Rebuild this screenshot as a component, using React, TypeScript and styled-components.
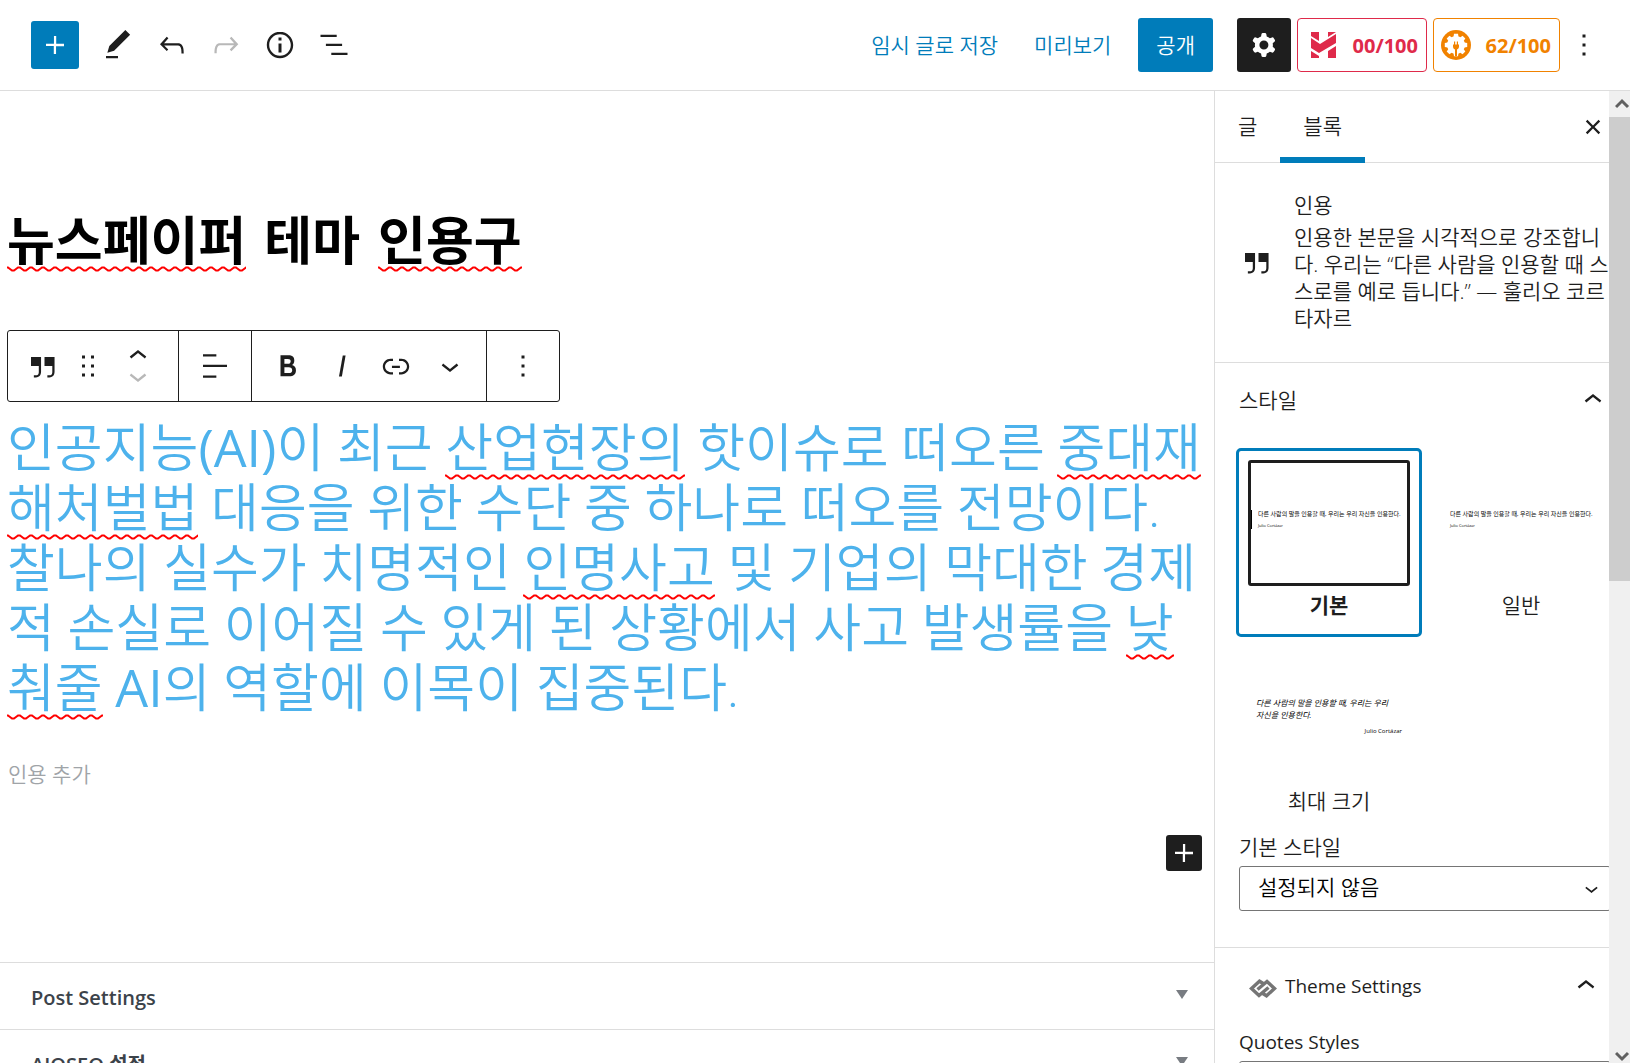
import React from "react";
import styled, { createGlobalStyle, css } from "styled-components";

const BLUE = "#007cba";
const INK = "#1e1e1e";
const LINE = "#dddddd";

const wave =
  "url(\"data:image/svg+xml,%3Csvg xmlns='http://www.w3.org/2000/svg' width='12' height='6'%3E%3Cpath d='M-1 1.5 L1 1.5 L5 4.5 L7 4.5 L11 1.5 L13 1.5' fill='none' stroke='%23ff0000' stroke-width='2'/%3E%3C/svg%3E\")";

const GlobalStyle = createGlobalStyle`
  * { box-sizing: border-box; }
  html, body, #root { height: 100%; }
  body {
    margin: 0;
    overflow: hidden;
    background: #fff;
    color: ${INK};
    font-family: "Open Sans", "Noto Sans CJK KR", sans-serif;
    font-size: 21px;
    line-height: 27px;
  }
  button, select, input, textarea { font: inherit; color: inherit; }
  h1, h2, h3, p { margin: 0; }
`;

const Page = styled.div`
  display: flex;
  flex-direction: column;
  height: 100vh;
`;

const Header = styled.header`
  flex: none;
  display: flex;
  align-items: center;
  justify-content: space-between;
  height: 91px;
  padding: 0 28px 0 31px;
  border-bottom: 1px solid ${LINE};
`;

const HeaderTools = styled.div`
  display: flex;
  align-items: center;
`;

const HeaderActions = styled.div`
  display: flex;
  align-items: center;
  gap: 6px;
`;

const IconButton = styled.button<{ $w?: number; $h?: number; $faint?: boolean }>`
  display: flex;
  align-items: center;
  justify-content: center;
  flex: none;
  width: ${(p) => p.$w ?? 54}px;
  height: ${(p) => p.$h ?? 54}px;
  padding: 0;
  border: 0;
  background: none;
  color: ${(p) => (p.$faint ? "#b8b8b8" : INK)};
`;

const InserterButton = styled(IconButton)`
  margin-right: 12px;
  border-radius: 3px;
  background: ${BLUE};
  color: #fff;
`;

const TextButton = styled.button`
  padding: 0;
  margin-right: 30px;
  border: 0;
  background: none;
  color: ${BLUE};
  font-weight: 350;
  white-space: nowrap;
`;

const PublishButton = styled.button`
  height: 54px;
  padding: 0 18px;
  margin: 0 18px 0 -9px;
  border: 0;
  border-radius: 3px;
  background: ${BLUE};
  color: #fff;
  font-weight: 350;
`;

const SettingsButton = styled(IconButton)`
  border-radius: 3px;
  background: ${INK};
  color: #fff;
`;

const ScoreButton = styled.button<{ $tone: string; $w: number }>`
  display: flex;
  align-items: center;
  justify-content: space-between;
  width: ${(p) => p.$w}px;
  height: 54px;
  padding: 0 8px 0 7px;
  border: 1px solid ${(p) => p.$tone};
  border-radius: 4px;
  background: #fff;
  color: ${(p) => p.$tone};
  font-size: 20px;
  font-weight: 700;
`;

const Body = styled.div`
  flex: 1;
  min-height: 0;
  display: grid;
  grid-template-columns: minmax(0, 1fr) 416px;
`;

const Editor = styled.main`
  min-width: 0;
  overflow: hidden;
`;

const Canvas = styled.section`
  display: flex;
  flex-direction: column;
  align-items: flex-start;
  height: 871px;
  padding: 118px 7px 0;
`;

const PostTitle = styled.h1`
  font-family: "DejaVu Sans", "Noto Sans CJK KR", sans-serif;
  font-size: 52px;
  line-height: 66px;
  font-weight: 700;
  color: #000;
`;

const Typo = styled.span`
  background: ${wave} repeat-x left bottom;
  -webkit-box-decoration-break: clone;
  box-decoration-break: clone;
`;

const BlockToolbar = styled.div`
  display: flex;
  height: 72px;
  margin-top: 55px;
  border: 1px solid ${INK};
  border-radius: 3px;
`;

const ToolGroup = styled.div`
  display: flex;
  align-items: center;
  padding: 0 9px;
  & + & { border-left: 1px solid ${INK}; }
`;

const Movers = styled.div`
  display: flex;
  flex-direction: column;
`;

const QuoteBlock = styled.blockquote`
  margin: 18px 0 0;
  color: #4db2ec;
  font-family: Roboto, "Noto Sans CJK KR", sans-serif;
  font-size: 52px;
  line-height: 60px;
  font-weight: 350;
`;

const Latin = styled.span`
  font-family: "Open Sans", sans-serif;
  font-weight: 400;
  line-height: 1;
`;

const CitationInput = styled.input`
  width: 400px;
  height: 36px;
  margin-top: 36px;
  padding: 0 1px;
  border: 0;
  outline: 0;
  font-weight: 350;
  &::placeholder { color: #a0a4a8; opacity: 1; }
`;

const AppenderRow = styled.div`
  display: flex;
  justify-content: flex-end;
  align-self: stretch;
  margin-top: 43px;
  padding-right: 5px;
`;

const AppendButton = styled(IconButton)`
  border-radius: 3px;
  background: ${INK};
  color: #fff;
`;

const MetaBox = styled.button`
  display: flex;
  align-items: center;
  justify-content: space-between;
  width: 100%;
  height: 67px;
  padding: 2px 26px 0 31px;
  border: 0;
  border-top: 1px solid ${LINE};
  background: #fff;
  color: #3c434a;
  font-size: 20px;
  font-weight: 600;
  text-align: left;
`;

const Triangle = styled.span`
  margin-bottom: 6px;
  border: 6px solid transparent;
  border-top: 9px solid #787c82;
  border-bottom: 0;
`;

const Sidebar = styled.aside`
  display: grid;
  grid-template-columns: minmax(0, 1fr) 21px;
  min-height: 0;
  border-left: 1px solid ${LINE};
  overflow: hidden;
  font-weight: 350;
`;

const SidebarClip = styled.div`
  min-width: 0;
  overflow: hidden;
`;

const SidebarContent = styled.div`
  width: 420px;
`;

const Tabs = styled.div`
  display: flex;
  align-items: stretch;
  height: 72px;
  border-bottom: 1px solid ${LINE};
`;

const Tab = styled.button<{ $active?: boolean }>`
  padding: 0 23px 2px;
  margin-bottom: -1px;
  border: 0;
  background: none;
  box-shadow: ${(p) => (p.$active ? `inset 0 -6px 0 ${BLUE}` : "none")};
`;

const CloseButton = styled(IconButton)`
  margin: 9px 15px 0 auto;
`;

const BlockCard = styled.section`
  display: grid;
  grid-template-columns: 55px minmax(0, 1fr);
  align-items: center;
  height: 200px;
  padding: 0 24px 2px;
  border-bottom: 1px solid ${LINE};
`;

const BlockIcon = styled.div`
  display: flex;
`;

const CardTitle = styled.h2`
  margin-bottom: 5px;
  font-size: 21px;
  font-weight: 350;
`;

const Panel = styled.section`
  padding: 0 24px 36px;
  border-bottom: 1px solid ${LINE};
`;

const PanelToggle = styled.button<{ $theme?: boolean }>`
  display: flex;
  align-items: center;
  width: 100%;
  height: 74px;
  padding: 0;
  border: 0;
  background: none;
  text-align: left;
  & > svg:last-child { margin-left: auto; }
  ${(p) =>
    p.$theme &&
    css`
      height: 76px;
      margin-bottom: 5px;
      padding: 0 7px 0 10px;
      font-weight: 400;
    `}
`;

const StyleGrid = styled.div`
  display: grid;
  grid-template-columns: 186px 186px;
  gap: 7px 6px;
  margin: 11px -6px 1px -3px;
`;

const StyleCard = styled.button<{ $selected?: boolean }>`
  display: flex;
  flex-direction: column;
  height: 189px;
  padding: 9px;
  border: 3px solid ${(p) => (p.$selected ? BLUE : "transparent")};
  border-radius: 5px;
  background: #fff;
  font-weight: ${(p) => (p.$selected ? 700 : 350)};
  text-align: center;
`;

const Preview = styled.span<{ $selected?: boolean }>`
  display: flex;
  flex-direction: column;
  justify-content: center;
  height: 126px;
  width: 100%;
  padding-bottom: 8px;
  border: 3px solid ${(p) => (p.$selected ? INK : "transparent")};
  border-radius: 3px;
  font-weight: 400;
`;

const PreviewQuote = styled.span<{ $bar?: boolean; $large?: boolean }>`
  display: flex;
  flex-direction: column;
  gap: 5px;
  padding-left: 6px;
  border-left: 1px solid ${(p) => (p.$bar ? "#000" : "transparent")};
  color: #000;
  font-size: 6px;
  line-height: 8px;
  text-align: left;
  white-space: nowrap;
  ${(p) =>
    p.$large &&
    css`
      gap: 7px;
      padding: 0 5px 0 4px;
      font-size: 8px;
      line-height: 12px;
      font-style: italic;
      white-space: normal;
      word-break: keep-all;
    `}
`;

const PreviewCite = styled.span<{ $large?: boolean }>`
  font-size: ${(p) => (p.$large ? 6 : 4)}px;
  line-height: 6px;
  font-style: normal;
  text-align: ${(p) => (p.$large ? "right" : "left")};
`;

const StyleLabel = styled.span`
  margin-top: 6px;
  width: 100%;
`;

const FieldLabel = styled.label<{ $latin?: boolean }>`
  display: block;
  margin-bottom: 5px;
  font-size: ${(p) => (p.$latin ? 19 : 21)}px;
  font-weight: ${(p) => (p.$latin ? 400 : 350)};
`;

const SelectWrap = styled.div`
  display: grid;
  align-items: center;
  & > * { grid-area: 1 / 1; }
  & > svg { justify-self: end; margin-right: 6px; pointer-events: none; }
`;

const Select = styled.select`
  appearance: none;
  width: 100%;
  height: 45px;
  padding: 0 40px 2px 18px;
  border: 1px solid #757575;
  border-radius: 3px;
  background: #fff;
  color: #000;
`;

const ThemeName = styled.span`
  margin-left: 8px;
  font-size: 19px;
`;

const Scrollbar = styled.div`
  display: flex;
  flex-direction: column;
  justify-content: space-between;
  min-height: 0;
  overflow: hidden;
  background: #f0f0f0;
`;

const ScrollArrow = styled.span<{ $h: number }>`
  display: flex;
  align-items: center;
  justify-content: flex-end;
  height: ${(p) => p.$h}px;
  flex: none;
`;

const ScrollThumb = styled.span`
  height: 464px;
  margin-bottom: auto;
  background: #cdcdcd;
`;

const ICONS = {
  plus: "M18 11.2h-5.2V6h-1.5v5.2H6v1.5h5.2V18h1.5v-5.2H18z",
  pencil: "M20.1 5.1L16.9 2 6.2 12.7l-1.3 4.4 4.5-1.3L20.1 5.1zM4 20.8h8v-1.5H4v1.5z",
  undo: "M18.3 11.7c-.6-.6-1.4-.9-2.3-.9H6.7l2.9-3.3-1.1-1-4.5 5L8.5 16l1-1-2.7-2.7H16c.5 0 .9.2 1.3.5 1 1 1 3.4 1 4.5v.3h1.5v-.2c0-1.5 0-4.3-1.5-5.7z",
  redo: "M15.6 6.5l-1.1 1 2.9 3.3H8c-.9 0-1.7.3-2.3.9-1.4 1.5-1.4 4.2-1.4 5.6v.2h1.5v-.3c0-1.1 0-3.5 1-4.5.3-.3.7-.5 1.3-.5h9.2L14.5 15l1.1 1.1 4.6-4.6-4.6-5z",
  info: "M12 3.2c-4.8 0-8.8 3.9-8.8 8.8 0 4.8 3.9 8.8 8.8 8.8 4.8 0 8.8-3.9 8.8-8.8 0-4.8-4-8.8-8.8-8.8zm0 16c-4 0-7.2-3.3-7.2-7.2C4.8 8 8 4.8 12 4.8s7.2 3.3 7.2 7.2c0 4-3.2 7.2-7.2 7.2zM11 17h2v-6h-2v6zm0-8h2V7h-2v2z",
  list: "M13.8 5.2H3v1.5h10.8V5.2zm-3.6 12v1.5H21v-1.5H10.2zm7.2-6H6.6v1.5h10.8v-1.5z",
  quote: "M13 6v6h5.2v4c0 .8-.2 1.4-.5 1.7-.6.6-1.6.6-2.5.5h-.3v1.5h.5c1 0 2.3-.1 3.3-1 .6-.6 1-1.6 1-2.8V6H13zm-9 6h5.2v4c0 .8-.2 1.4-.5 1.7-.6.6-1.6.6-2.5.5h-.3v1.5h.5c1 0 2.3-.1 3.3-1 .6-.6 1-1.6 1-2.8V6H4v6z",
  drag: "M8 7h2V5H8v2zm6-2v2h2V5h-2zm-6 8h2v-2H8v2zm6 0h2v-2h-2v2zm-6 6h2v-2H8v2zm6 0h2v-2h-2v2z",
  up: "M6.5 12.4L12 8l5.5 4.4-.9 1.2L12 10l-4.5 3.6-1-1.2z",
  down: "M17.5 11.6L12 16l-5.5-4.4.9-1.2L12 14l4.5-3.6 1 1.2z",
  align: "M4 19.8h8.9v-1.5H4v1.5zm8.9-15.6H4v1.5h8.9V4.2zm-8.9 7v1.5h16v-1.5H4z",
  bold: "M14.7 11.3c1-.6 1.5-1.6 1.5-3 0-2.3-1.3-3.4-4-3.4H7v14h5.8c1.4 0 2.5-.3 3.3-1 .8-.7 1.2-1.7 1.2-2.9.1-1.9-.8-3.1-2.6-3.7zm-5.1-4h2.3c.6 0 1.1.1 1.4.4.3.3.5.7.5 1.2s-.2 1-.5 1.2c-.3.3-.8.4-1.4.4H9.6V7.3zm4.6 9c-.4.3-1 .4-1.7.4H9.6v-3.9h2.9c.7 0 1.3.2 1.7.5.4.3.6.8.6 1.5s-.2 1.2-.6 1.5z",
  italic: "M12.5 5L10 19h1.9l2.5-14z",
  link: "M15.6 7.2H14v1.5h1.6c2 0 3.7 1.7 3.7 3.7s-1.7 3.7-3.7 3.7H14v1.5h1.6c2.8 0 5.2-2.3 5.2-5.2 0-2.9-2.3-5.2-5.2-5.2zM4.7 12.4c0-2 1.7-3.7 3.7-3.7H10V7.2H8.4c-2.9 0-5.2 2.3-5.2 5.2 0 2.9 2.3 5.2 5.2 5.2H10v-1.5H8.4c-2 0-3.7-1.7-3.7-3.7zm4.6.9h5.3v-1.5H9.3v1.5z",
  more: "M13 19h-2v-2h2v2zm0-6h-2v-2h2v2zm0-6h-2V5h2v2z",
  close: "M12 13.06l3.712 3.713 1.061-1.06L13.061 12l3.712-3.712-1.06-1.06L12 10.938 8.288 7.227l-1.061 1.06L10.939 12l-3.712 3.712 1.06 1.061L12 13.061z",
  cog: "M10.289 4.836A1 1 0 0111.275 4h1.306a1 1 0 01.987.836l.244 1.466c.787.26 1.503.679 2.108 1.218l1.393-.522a1 1 0 011.216.437l.653 1.13a1 1 0 01-.23 1.273l-1.148.944a6.025 6.025 0 010 2.435l1.149.946a1 1 0 01.23 1.272l-.653 1.13a1 1 0 01-1.216.437l-1.394-.522c-.605.54-1.32.958-2.108 1.218l-.244 1.466a1 1 0 01-.987.836h-1.306a1 1 0 01-.986-.836l-.244-1.466a5.995 5.995 0 01-2.108-1.218l-1.394.522a1 1 0 01-1.217-.436l-.653-1.131a1 1 0 01.23-1.272l1.149-.946a6.026 6.026 0 010-2.435l-1.148-.944a1 1 0 01-.23-1.272l.653-1.131a1 1 0 011.217-.437l1.393.522a5.994 5.994 0 012.108-1.218l.244-1.466zM14.929 12a3 3 0 11-6 0 3 3 0 016 0z",
};

function Icon({ name, size = 36 }: { name: keyof typeof ICONS; size?: number }) {
  return (
    <svg width={size} height={size} viewBox="0 0 24 24" fill="currentColor" fillRule="evenodd" aria-hidden="true">
      <path d={ICONS[name]} />
    </svg>
  );
}

const HeadlineLogo = () => (
  <svg width="37" height="26" viewBox="-6 0 37 26" fill="currentColor" aria-hidden="true">
    <path d="M0 0h8v9L0 4zM17 0h8l-8 5zM0 6l9 6 16-10v9L8 21 0 16zM0 19l8 5v2H0zM25 14v12h-8v-7z" />
  </svg>
);

const SeoLogo = () => (
  <svg width="30" height="30" viewBox="0 0 30 30" aria-hidden="true">
    <circle cx="15" cy="15" r="15" fill="currentColor" />
    <circle cx="15" cy="15" r="9" fill="#fff" />
    <g fill="#fff">
      {[0, 45, 90, 135, 180, 225, 270, 315].map((angle) => (
        <path key={angle} d="M12.300 8L13 3.800h4L17.700 8z" transform={`rotate(${angle} 15 15)`} />
      ))}
    </g>
    <path d="M12 14.500h6v2c0 1.500-.8 2.500-2 3V26h-2v-6.500c-1.200-.5-2-1.500-2-3zM13 11.500h1.200v3H13zM15.800 11.500H17v3h-1.200z" fill="currentColor" />
  </svg>
);

const ThemeLogo = () => (
  <svg width="28" height="23" viewBox="0 -4 28 23" fill="none" stroke="#757575" strokeWidth="3.400" aria-hidden="true">
    <path d="M15 5L10.500 2.200 2.500 9.500l7.500 7 9.500-8M13 14l4.500 2.800 8-7.300-7.500-7-9.500 8" />
  </svg>
);

const QUOTE = "다른 사람의 말을 인용할 때, 우리는 우리 자신을 인용한다.";

export default function App() {
  return (
    <>
      <GlobalStyle />
      <Page>
        <Header>
          <HeaderTools>
            <InserterButton $w={48} $h={48} aria-label="블록 삽입"><Icon name="plus" /></InserterButton>
            <IconButton aria-label="도구"><Icon name="pencil" /></IconButton>
            <IconButton aria-label="되돌리기"><Icon name="undo" /></IconButton>
            <IconButton $faint aria-label="다시 실행"><Icon name="redo" /></IconButton>
            <IconButton aria-label="세부사항"><Icon name="info" /></IconButton>
            <IconButton aria-label="목록 보기"><Icon name="list" /></IconButton>
          </HeaderTools>
          <HeaderActions>
            <TextButton>임시 글로 저장</TextButton>
            <TextButton>미리보기</TextButton>
            <PublishButton>공개</PublishButton>
            <SettingsButton aria-label="설정"><Icon name="cog" /></SettingsButton>
            <ScoreButton $w={130} $tone="#df2a4a"><HeadlineLogo />00/100</ScoreButton>
            <ScoreButton $w={127} $tone="#f18200"><SeoLogo />62/100</ScoreButton>
            <IconButton $w={36} aria-label="옵션"><Icon name="more" /></IconButton>
          </HeaderActions>
        </Header>

        <Body>
          <Editor>
            <Canvas>
              <PostTitle><Typo>뉴스페이퍼</Typo> 테마 <Typo>인용구</Typo></PostTitle>
              <BlockToolbar role="toolbar" aria-label="블록 도구">
                <ToolGroup>
                  <IconButton $w={52} aria-label="인용"><Icon name="quote" /></IconButton>
                  <IconButton $w={38} aria-label="드래그"><Icon name="drag" /></IconButton>
                  <Movers>
                    <IconButton $w={62} $h={20} aria-label="위로 이동"><Icon name="up" /></IconButton>
                    <IconButton $w={62} $h={20} $faint aria-label="아래로 이동"><Icon name="down" /></IconButton>
                  </Movers>
                </ToolGroup>
                <ToolGroup>
                  <IconButton aria-label="정렬"><Icon name="align" /></IconButton>
                </ToolGroup>
                <ToolGroup>
                  <IconButton aria-label="굵게"><Icon name="bold" /></IconButton>
                  <IconButton aria-label="기울임"><Icon name="italic" /></IconButton>
                  <IconButton aria-label="링크"><Icon name="link" /></IconButton>
                  <IconButton aria-label="더보기"><Icon name="down" /></IconButton>
                </ToolGroup>
                <ToolGroup>
                  <IconButton aria-label="옵션"><Icon name="more" /></IconButton>
                </ToolGroup>
              </BlockToolbar>
              <QuoteBlock>
                인공지능<Latin>(AI)</Latin>이 최근 <Typo>산업현장의</Typo> 핫이슈로 떠오른{" "}
                <Typo>중대재해처벌법</Typo> 대응을 위한 수단 중 하나로 떠오를 전망이다. 찰나의 실수가 치명적인{" "}
                <Typo>인명사고</Typo> 및 기업의 막대한 경제적 손실로 이어질 수 있게 된 상황에서 사고 발생률을{" "}
                <Typo>낮춰줄</Typo> <Latin>AI</Latin>의 역할에 이목이 집중된다.
              </QuoteBlock>
              <CitationInput placeholder="인용 추가" aria-label="인용 추가" />
              <AppenderRow>
                <AppendButton $w={36} $h={36} aria-label="블록 추가"><Icon name="plus" /></AppendButton>
              </AppenderRow>
            </Canvas>
            <MetaBox>Post Settings<Triangle /></MetaBox>
            <MetaBox>AIOSEO 설정<Triangle /></MetaBox>
          </Editor>

          <Sidebar>
            <SidebarClip>
              <SidebarContent>
                <Tabs>
                  <Tab>글</Tab>
                  <Tab $active>블록</Tab>
                  <CloseButton aria-label="설정 닫기"><Icon name="close" /></CloseButton>
                </Tabs>
                <BlockCard>
                  <BlockIcon><Icon name="quote" /></BlockIcon>
                  <div>
                    <CardTitle>인용</CardTitle>
                    <p>인용한 본문을 시각적으로 강조합니다. 우리는 “다른 사람을 인용할 때 스스로를 예로 듭니다.” — 훌리오 코르타자르</p>
                  </div>
                </BlockCard>
                <Panel>
                  <PanelToggle>스타일<Icon name="up" /></PanelToggle>
                  <StyleGrid>
                    <StyleCard $selected>
                      <Preview $selected>
                        <PreviewQuote $bar>{QUOTE}<PreviewCite>Julio Cortázar</PreviewCite></PreviewQuote>
                      </Preview>
                      <StyleLabel>기본</StyleLabel>
                    </StyleCard>
                    <StyleCard>
                      <Preview>
                        <PreviewQuote>{QUOTE}<PreviewCite>Julio Cortázar</PreviewCite></PreviewQuote>
                      </Preview>
                      <StyleLabel>일반</StyleLabel>
                    </StyleCard>
                    <StyleCard>
                      <Preview>
                        <PreviewQuote $large>{QUOTE}<PreviewCite $large>Julio Cortázar</PreviewCite></PreviewQuote>
                      </Preview>
                      <StyleLabel>최대 크기</StyleLabel>
                    </StyleCard>
                  </StyleGrid>
                  <FieldLabel htmlFor="default-style">기본 스타일</FieldLabel>
                  <SelectWrap>
                    <Select id="default-style"><option>설정되지 않음</option></Select>
                    <Icon name="down" size={27} />
                  </SelectWrap>
                </Panel>
                <Panel>
                  <PanelToggle $theme><ThemeLogo /><ThemeName>Theme Settings</ThemeName><Icon name="up" /></PanelToggle>
                  <FieldLabel $latin htmlFor="quote-style">Quotes Styles</FieldLabel>
                  <SelectWrap>
                    <Select id="quote-style"><option>Default</option></Select>
                    <Icon name="down" size={27} />
                  </SelectWrap>
                </Panel>
              </SidebarContent>
            </SidebarClip>
            <Scrollbar aria-hidden="true">
              <ScrollArrow $h={26}>
                <svg width="15" height="12" viewBox="0 0 15 12" fill="none" stroke="#606060" strokeWidth="3"><path d="M1 9l6-6 6 6" /></svg>
              </ScrollArrow>
              <ScrollThumb />
              <ScrollArrow $h={12}>
                <svg width="15" height="12" viewBox="0 0 15 12" fill="none" stroke="#606060" strokeWidth="3"><path d="M1 2l6 6 6-6" /></svg>
              </ScrollArrow>
            </Scrollbar>
          </Sidebar>
        </Body>
      </Page>
    </>
  );
}
